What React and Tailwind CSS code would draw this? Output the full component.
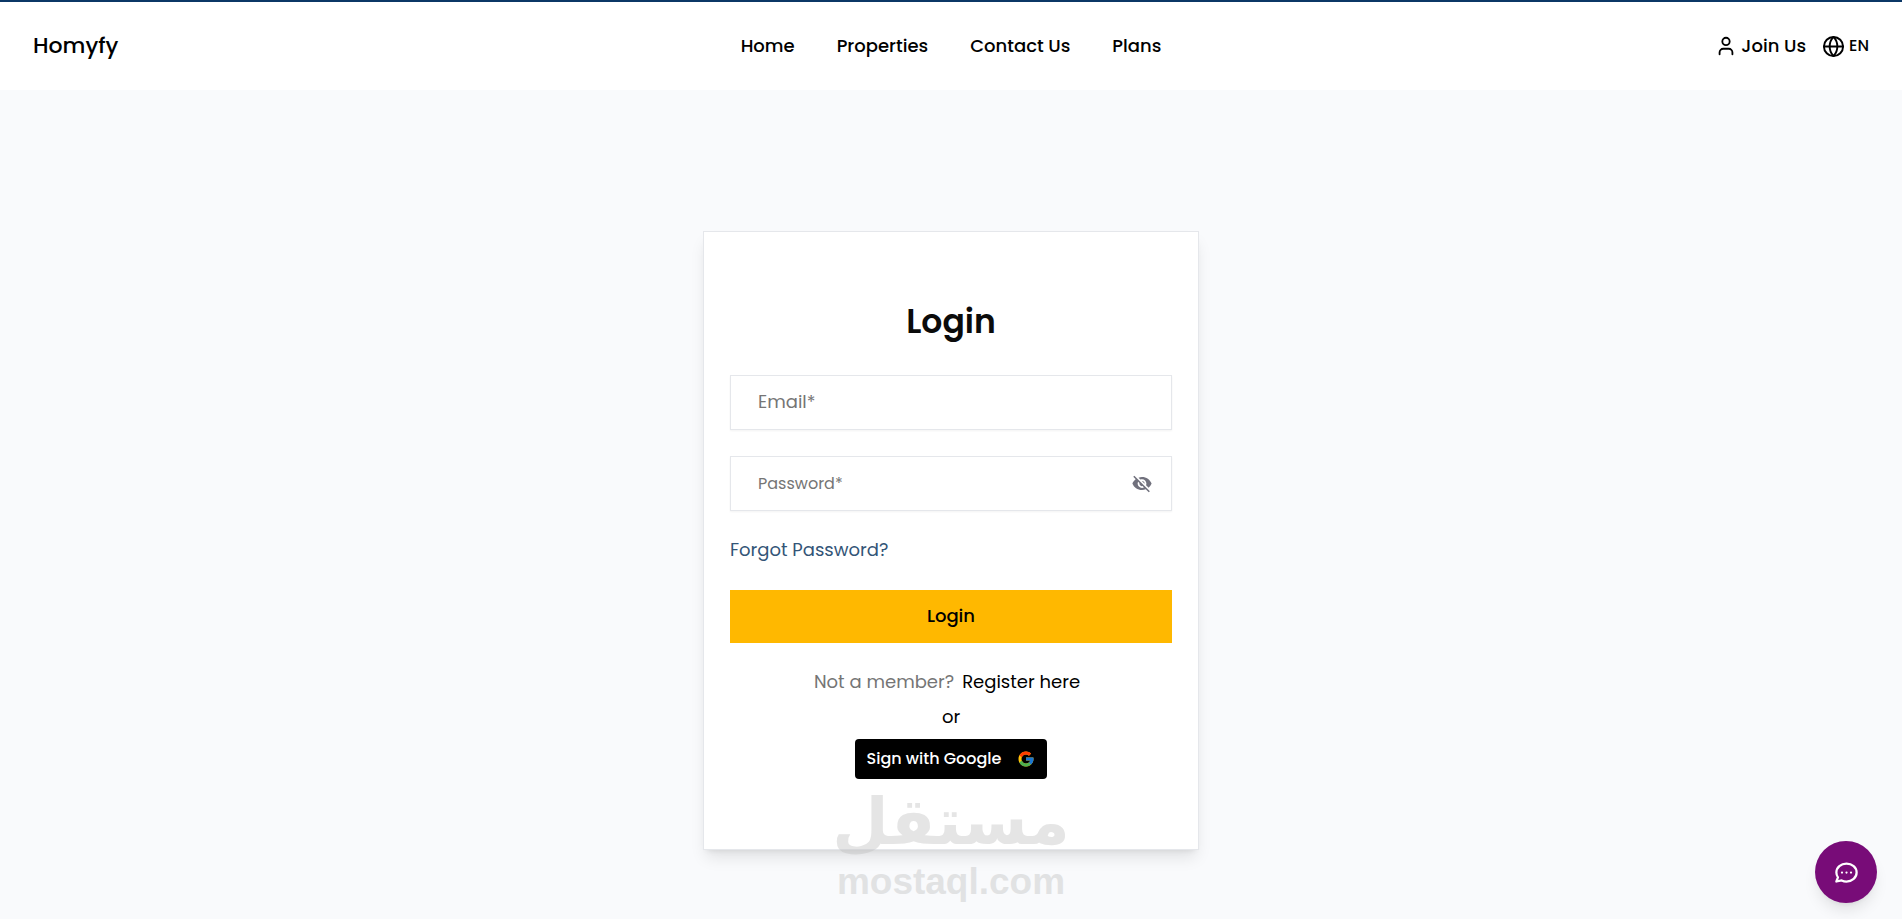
import { Globe, User } from "lucide-react";
import { FcGoogle } from "react-icons/fc";
import { HiOutlineChat } from "react-icons/hi";
import { IoMdEyeOff } from "react-icons/io";

const links = ["Home", "Properties", "Contact Us", "Plans"];

function Header() {
  return (
    <header className="grid h-[90px] grid-cols-[1fr_auto_1fr] items-center border-t-2 border-[#0b3766] bg-white px-[33px] text-black">
      <a href="#" className="justify-self-start text-[22px] leading-8 font-medium">
        Homyfy
      </a>
      <nav className="flex gap-[42px] text-[18px] leading-7 font-medium">
        {links.map((name) => (
          <a key={name} href="#">
            {name}
          </a>
        ))}
      </nav>
      <div className="flex items-center gap-4 justify-self-end font-medium">
        <a href="#" className="flex items-center gap-1 text-[18px] leading-7">
          <User size={22} aria-hidden="true" />
          Join Us
        </a>
        <button type="button" className="flex items-center gap-1 text-[16px] leading-7">
          <Globe size={23} aria-hidden="true" />
          EN
        </button>
      </div>
    </header>
  );
}

function LoginCard() {
  return (
    <form className="flex w-full max-w-[496px] flex-col border border-gray-200 bg-white px-[26px] pt-[66px] pb-[70px] shadow-lg">
      <h1 className="text-center text-[33px] leading-[48px] font-semibold text-[#0b0b0b]">Login</h1>

      <input
        type="email"
        aria-label="Email"
        placeholder="Email*"
        className="mt-[29px] h-[55px] w-full border border-gray-200 px-[27px] pb-0.5 text-[18px] shadow-xs outline-none placeholder:text-[#757575]"
      />

      <div className="mt-[26px] flex h-[55px] items-center border border-gray-200 pr-[18px] pl-[27px] shadow-xs">
        <input
          type="password"
          aria-label="Password"
          placeholder="Password*"
          className="h-full min-w-0 flex-1 text-[16px] outline-none placeholder:text-[#757575]"
        />
        <button type="button" aria-label="Show password" className="text-[#71717d]">
          <IoMdEyeOff size={22} />
        </button>
      </div>

      <a href="#" className="mt-[25px] self-start text-[18px] leading-7 text-[#335577]">
        Forgot Password?
      </a>

      <button type="submit" className="mt-[26px] h-[53px] w-full bg-[#ffb800] pb-0.5 text-[18px] font-medium text-black">
        Login
      </button>

      <p className="mt-[25px] pr-2 text-center text-[18px] leading-7 text-[#757575]">
        Not a member?
        <a href="#" className="ml-2 text-black">
          Register here
        </a>
      </p>
      <p className="mt-[7px] text-center text-[18px] leading-7 text-black">or</p>

      <button
        type="button"
        className="mt-2 flex h-10 items-center gap-4 self-center rounded bg-black px-3 text-[16px] font-medium text-white"
      >
        Sign with Google
        <FcGoogle size={18} aria-hidden="true" />
      </button>
    </form>
  );
}

function Watermark() {
  return (
    <div className="pointer-events-none absolute inset-x-0 bottom-4 flex flex-col items-center text-[#bfbfbf] opacity-40">
      <span lang="ar" dir="rtl" className="font-['DejaVu_Sans',sans-serif] text-[65px] leading-[76px] font-bold">
        مستقل
      </span>
      <span className="font-['Liberation_Sans',sans-serif] text-[37px] leading-[43px] font-bold">mostaql.com</span>
    </div>
  );
}

export default function App() {
  return (
    <div className="relative flex min-h-screen flex-col bg-[#f9fafc] font-['Poppins','Inter',sans-serif]">
      <Header />
      <main className="flex flex-1 items-start justify-center px-4 pt-[141px] pb-[68px]">
        <LoginCard />
      </main>
      <Watermark />
      <button
        type="button"
        aria-label="Open chat"
        className="fixed right-[25px] bottom-4 flex size-[62px] items-center justify-center rounded-full bg-[#780c78] text-white shadow-lg"
      >
        <HiOutlineChat size={27} />
      </button>
    </div>
  );
}
